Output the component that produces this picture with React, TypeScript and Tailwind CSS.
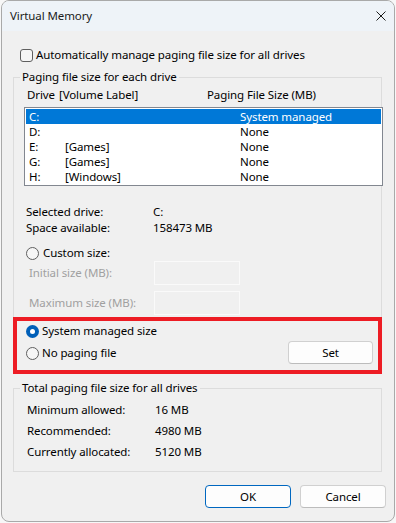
import React from "react";

function Checkbox() {
  return <span className="w-[13px] h-[13px] rounded-[3px] border border-[#5f5f5f] bg-[#f6f6f6] shrink-0" />;
}

function Radio({ checked }: { checked?: boolean }) {
  if (checked) {
    return (
      <span className="w-[13px] h-[13px] rounded-full bg-[#005fb8] flex items-center justify-center shrink-0">
        <span className="w-[5px] h-[5px] rounded-full bg-white" />
      </span>
    );
  }
  return <span className="w-[13px] h-[13px] rounded-full border border-[#5f5f5f] bg-[#f6f6f6] shrink-0" />;
}

const drives = [
  { d: "C:", label: "", size: "System managed", sel: true },
  { d: "D:", label: "", size: "None" },
  { d: "E:", label: "[Games]", size: "None" },
  { d: "G:", label: "[Games]", size: "None" },
  { d: "H:", label: "[Windows]", size: "None" },
];

export default function App() {
  return (
    <div className="w-[396px] h-[523px] bg-[#f7f7f7] pl-[1px] font-['Noto_Sans',sans-serif] text-[11.5px] tracking-[-0.1px] leading-[16px] text-black">
      <div className="w-[394px] h-[522px] rounded-[8px] border border-[#a9a9a9] overflow-hidden flex flex-col bg-[#f0f0f0]">
        <div className="h-[30px] shrink-0 bg-[#eef3f8] flex items-center justify-between pl-[8px] pr-[8px]">
          <span className="text-[#1b1b1b]">Virtual Memory</span>
          <svg width="10" height="10" viewBox="0 0 10 10" className="mt-[-1px]">
            <path d="M0.5 0.5 L9.5 9.5 M9.5 0.5 L0.5 9.5" stroke="#1b1b1b" strokeWidth="1" fill="none" />
          </svg>
        </div>
        <div className="flex-1 flex flex-col pt-[16px]">
          <div className="flex items-center gap-[3px] h-[16px] pl-[18px]">
            <Checkbox />
            <span>Automatically manage paging file size for all drives</span>
          </div>

          <fieldset className="mt-[6px] ml-[11px] w-[369px] border border-[#dcdcdc] p-0 m-0 min-w-0">
            <legend className="ml-[6px] px-[2px] leading-[16px]">Paging file size for each drive</legend>
            <div className="flex flex-col">
              <div className="mt-[2px] pl-[13px] flex h-[16px]">
                <span className="w-[32px]">Drive</span>
                <span className="w-[148px]">[Volume Label]</span>
                <span>Paging File Size (MB)</span>
              </div>
              <div className="mt-[4px] ml-[10px] w-[359px] h-[79px] border border-[#828790] bg-white p-[1px]">
                {drives.map((r) => (
                  <div
                    key={r.d}
                    className={
                      "h-[15px] leading-[15px] flex pl-[3px] " +
                      (r.sel ? "bg-[#0078d7] text-white" : "text-black")
                    }
                  >
                    <span className="w-[36px]">{r.d}</span>
                    <span className="w-[175px]">{r.label}</span>
                    <span>{r.size}</span>
                  </div>
                ))}
              </div>

              <div className="mt-[18px] pl-[12px] flex h-[16px]">
                <span className="w-[127px]">Selected drive:</span>
                <span>C:</span>
              </div>
              <div className="pl-[12px] flex h-[16px]">
                <span className="w-[127px]">Space available:</span>
                <span>158473 MB</span>
              </div>

              <div className="mt-[9px] pl-[12px] flex items-center gap-[4px] h-[16px]">
                <Radio />
                <span>Custom size:</span>
              </div>
              <div className="pl-[15px] flex items-center h-[24px] text-[#a0a0a0]">
                <span className="w-[125px]">Initial size (MB):</span>
                <span className="w-[86px] h-[24px] border border-[#fafafa]" />
              </div>
              <div className="mt-[6px] pl-[15px] flex items-center h-[24px] text-[#a0a0a0]">
                <span className="w-[125px]">Maximum size (MB):</span>
                <span className="w-[86px] h-[24px] border border-[#fafafa]" />
              </div>

              <div className="mt-[2px] -ml-[1px] -mb-[1px] w-[369px] h-[57px] border-[4px] border-[#ed1c24] flex justify-between">
                <div className="pl-[9px] pt-[2px] flex flex-col gap-[6px]">
                  <div className="flex items-center gap-[3px] h-[16px]">
                    <Radio checked />
                    <span>System managed size</span>
                  </div>
                  <div className="flex items-center gap-[3px] h-[16px]">
                    <Radio />
                    <span>No paging file</span>
                  </div>
                </div>
                <button className="self-end mb-[6px] mr-[5px] w-[85px] h-[23px] rounded-[4px] border border-[#d0d0d0] border-b-[#bcbcbc] bg-[#fdfdfd] leading-[16px]">
                  Set
                </button>
              </div>
            </div>
          </fieldset>

          <fieldset className="mt-[6px] ml-[11px] w-[369px] border border-[#dcdcdc] p-0 m-0 min-w-0">
            <legend className="ml-[6px] px-[2px] leading-[16px]">Total paging file size for all drives</legend>
            <div className="flex flex-col gap-[5px] pt-[6px] pb-[11px] pl-[13px]">
              <div className="flex h-[16px]">
                <span className="w-[128px]">Minimum allowed:</span>
                <span>16 MB</span>
              </div>
              <div className="flex h-[16px]">
                <span className="w-[128px]">Recommended:</span>
                <span>4980 MB</span>
              </div>
              <div className="flex h-[16px]">
                <span className="w-[128px]">Currently allocated:</span>
                <span>5120 MB</span>
              </div>
            </div>
          </fieldset>

          <div className="mt-[13px] flex justify-end gap-[9px] pr-[8px]">
            <button className="w-[86px] h-[23px] rounded-[4px] border border-[#0067c0] bg-[#fdfdfd] leading-[16px]">
              OK
            </button>
            <button className="w-[86px] h-[23px] rounded-[4px] border border-[#d0d0d0] border-b-[#bcbcbc] bg-[#fdfdfd] leading-[16px]">
              Cancel
            </button>
          </div>
        </div>
      </div>
    </div>
  );
}
